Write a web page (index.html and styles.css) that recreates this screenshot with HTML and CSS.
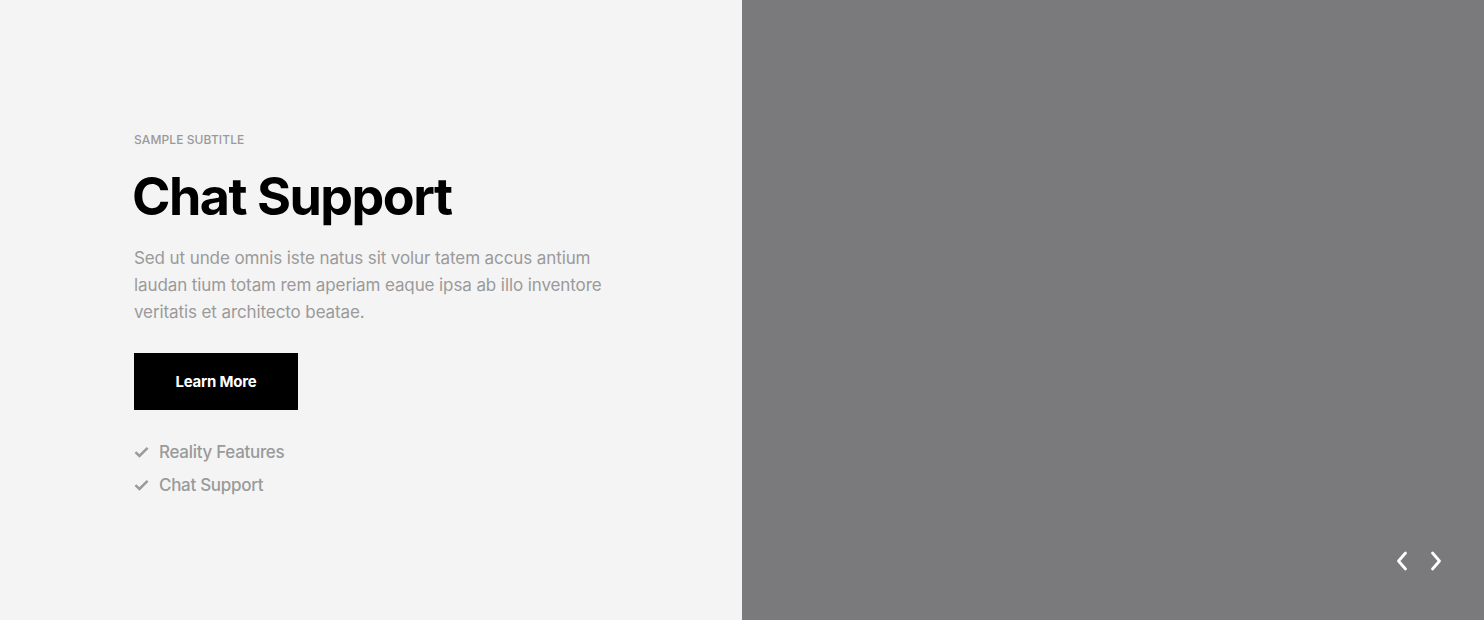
FILE: index.html
```html
<!DOCTYPE html>
<html lang="en">
<head>
<meta charset="utf-8">
<title>Chat Support</title>
<link rel="stylesheet" href="styles.css">
</head>
<body>
<section class="hero">
  <div class="hero-text">
    <div class="content">
      <p class="subtitle">SAMPLE SUBTITLE</p>
      <h1 class="title">Chat Support</h1>
      <p class="desc">Sed ut unde omnis iste natus sit volur tatem accus antium laudan tium totam rem aperiam eaque ipsa ab illo inventore veritatis et architecto beatae.</p>
      <a class="btn" href="#">Learn More</a>
      <ul class="features">
        <li><svg class="check" viewBox="0 0 16 12" width="15" height="12"><path d="M1.5 6.2 L5.8 10.2 L14.5 1.6" fill="none" stroke="currentColor" stroke-width="2.6"/></svg>Reality Features</li>
        <li><svg class="check" viewBox="0 0 16 12" width="15" height="12"><path d="M1.5 6.2 L5.8 10.2 L14.5 1.6" fill="none" stroke="currentColor" stroke-width="2.6"/></svg>Chat Support</li>
      </ul>
    </div>
  </div>
  <div class="hero-media">
    <div class="nav">
      <button class="arrow" aria-label="Previous"><svg viewBox="0 0 12 20" width="12" height="20"><path d="M9.5 2 L2.5 10 L9.5 18" fill="none" stroke="#fff" stroke-width="2.8" stroke-linecap="round" stroke-linejoin="round"/></svg></button>
      <button class="arrow" aria-label="Next"><svg viewBox="0 0 12 20" width="12" height="20"><path d="M2.5 2 L9.5 10 L2.5 18" fill="none" stroke="#fff" stroke-width="2.8" stroke-linecap="round" stroke-linejoin="round"/></svg></button>
    </div>
  </div>
</section>
</body>
</html>
```
FILE: styles.css
```css
* { box-sizing: border-box; }
html, body { margin: 0; padding: 0; }
body {
  font-family: Inter, "Noto Sans", "Liberation Sans", sans-serif;
  width: 1484px;
  height: 620px;
  overflow: hidden;
}
.hero {
  display: grid;
  grid-template-columns: 742px 742px;
  height: 620px;
}
.hero-text {
  background: #f4f4f4;
  display: flex;
  align-items: flex-start;
  padding: 133px 0 0 134px;
}
.content {
  width: 500px;
}
.subtitle {
  margin: 0;
  font-size: 12px;
  line-height: 14px;
  font-weight: 500;
  color: #9a9a9a;
  letter-spacing: 0.1px;
}
.title {
  margin: 18px 0 0 -2px;
  font-size: 52px;
  line-height: 64px;
  font-weight: 700;
  letter-spacing: -1.5px;
  color: #000;
}
.desc {
  margin: 16px 0 0;
  font-size: 17px;
  line-height: 27px;
  color: #9a9a9a;
  letter-spacing: -0.1px;
  width: 480px;
}
.btn {
  display: flex;
  align-items: center;
  justify-content: center;
  width: 164px;
  height: 57px;
  margin-top: 27px;
  background: #000;
  color: #fff;
  font-size: 15px;
  font-weight: 700;
  text-decoration: none;
  letter-spacing: -0.2px;
}
.features {
  list-style: none;
  margin: 25px 0 0;
  padding: 0;
}
.features li {
  display: flex;
  align-items: center;
  height: 33px;
  font-size: 17px;
  font-weight: 500;
  color: #9a9a9a;
  letter-spacing: -0.3px;
}
.check {
  color: #9a9a9a;
  margin-right: 10px;
}
.hero-media {
  background: #7a7a7c;
  display: flex;
  align-items: flex-end;
  justify-content: flex-end;
  padding: 0 42px 49px 0;
}
.nav {
  display: flex;
  gap: 22px;
}
.arrow {
  background: none;
  border: 0;
  padding: 0;
  width: 12px;
  height: 20px;
  cursor: pointer;
  display: flex;
}
```
